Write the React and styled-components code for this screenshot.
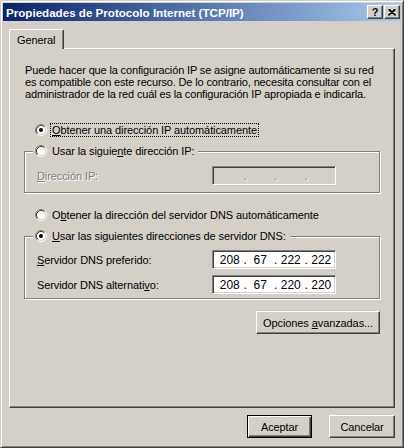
import styled, { createGlobalStyle } from "styled-components";

const Global = createGlobalStyle`
  html, body {
    margin: 0;
    padding: 0;
    background: #d4d0c8;
  }
  body {
    font-family: "Liberation Sans", Arial, sans-serif;
    font-size: 11px;
    letter-spacing: -0.1px;
    color: #000;
  }
`;

const Window = styled.div`
  width: 404px;
  height: 448px;
  box-sizing: border-box;
  background: #d4d0c8;
  border: 1px solid;
  border-color: #d4d0c8 #404040 #404040 #d4d0c8;
  box-shadow: inset 1px 1px #fff, inset -1px -1px #808080;
  padding: 2px;
  display: flex;
  flex-direction: column;
`;

const TitleBar = styled.div`
  height: 18px;
  display: flex;
  align-items: center;
  padding: 0 1px 0 3px;
  background: linear-gradient(to right, #0a246a, #a6caf0);
  color: #fff;
  font-weight: bold;
  font-size: 11.6px;
  letter-spacing: 0;
`;

const Title = styled.span`
  flex: 1;
  white-space: nowrap;
`;

const CaptionButtons = styled.div`
  display: flex;
  gap: 1px;
`;

const CaptionButton = styled.div`
  width: 16px;
  height: 14px;
  box-sizing: border-box;
  background: #d4d0c8;
  border: 1px solid;
  border-color: #fff #404040 #404040 #fff;
  box-shadow: inset -1px -1px #808080;
  display: flex;
  align-items: center;
  justify-content: center;
  color: #000;
  font-weight: bold;
  font-size: 11px;
  line-height: 1;
`;

const Body = styled.div`
  flex: 1;
  display: flex;
  flex-direction: column;
  padding: 8px 6px 0;
`;

const TabStrip = styled.div`
  display: flex;
  position: relative;
  z-index: 1;
`;

const Tab = styled.div`
  height: 20px;
  box-sizing: border-box;
  padding: 0 8px 0 7px;
  margin-bottom: -1px;
  display: flex;
  align-items: center;
  background: #d4d0c8;
  border-left: 1px solid #fff;
  border-top: 1px solid #fff;
  border-right: 1px solid #404040;
  border-top-left-radius: 2px;
  border-top-right-radius: 2px;
  box-shadow: inset -1px 0 #808080;
`;

const Panel = styled.div`
  height: 360px;
  box-sizing: border-box;
  border: 1px solid;
  border-color: #fff #404040 #404040 #fff;
  box-shadow: inset -1px -1px #808080;
  padding: 15px 14px 0;
  display: flex;
  flex-direction: column;
`;

const Intro = styled.p`
  margin: 0 -4px 0 1px;
  line-height: 12px;
  letter-spacing: -0.15px;
`;

const RadioRow = styled.div`
  display: flex;
  align-items: center;
  height: 14px;
  margin: ${(p) => p.$top || 0}px 0 0 ${(p) => (p.$inset ? 0 : 11)}px;
`;

const Label = styled.span`
  margin-left: 3px;
  padding: 0 1px;
  line-height: 12px;
  border: 1px ${(p) => (p.$focus ? "dotted #000" : "solid transparent")};
  white-space: nowrap;
`;

const Key = styled.span`
  text-decoration: underline;
`;

const Group = styled.fieldset`
  margin: ${(p) => p.$top}px 0 0;
  padding: ${(p) => p.$pad};
  min-width: 0;
  border: 1px solid #808080;
  box-shadow: 1px 1px #fff, inset 1px 1px #fff;
  display: flex;
  flex-direction: column;
  gap: 6px;
`;

const Legend = styled.legend`
  margin-left: -4px;
  padding: 0 2px;
  background: #d4d0c8;
`;

const FieldRow = styled.div`
  display: grid;
  grid-template-columns: 175px 124px;
  align-items: center;
`;

const FieldLabel = styled.span`
  color: ${(p) => (p.$disabled ? "#808080" : "#000")};
  text-shadow: ${(p) => (p.$disabled ? "1px 1px #fff" : "none")};
`;

const IpBox = styled.div`
  height: 19px;
  box-sizing: border-box;
  border: 1px solid;
  border-color: #808080 #fff #fff #808080;
  box-shadow: inset 1px 1px #404040, inset -1px -1px #d4d0c8;
  background: ${(p) => (p.$disabled ? "#d4d0c8" : "#fff")};
  color: ${(p) => (p.$disabled ? "#808080" : "#000")};
  display: flex;
  align-items: center;
  padding: 0 0 0 3px;
  font-size: 12px;
  letter-spacing: 0;
`;

const Octet = styled.span`
  width: 28px;
  text-align: center;
`;

const Dot = styled.span`
  width: 3px;
  text-align: center;
  text-shadow: ${(p) => (p.$disabled ? "1px 1px #fff" : "none")};
`;

const ButtonRow = styled.div`
  display: flex;
  justify-content: flex-end;
  gap: 17px;
  margin-top: ${(p) => p.$top || 0}px;
`;

const Button = styled.button`
  width: ${(p) => p.$w}px;
  height: 23px;
  box-sizing: border-box;
  padding: 0;
  font: inherit;
  letter-spacing: inherit;
  color: #000;
  background: #d4d0c8;
  border: 1px solid;
  border-color: ${(p) => (p.$default ? "#000" : "#fff #404040 #404040 #fff")};
  box-shadow: ${(p) =>
    p.$default
      ? "inset 1px 1px #fff, inset -1px -1px #404040, inset -2px -2px #808080"
      : "inset -1px -1px #808080"};
`;

const Radio = ({ checked }) => (
  <svg width="12" height="12" viewBox="0 0 12 12">
    <circle cx="6" cy="6" r="4.5" fill="#fff" />
    <path d="M2.11 9.89 A5.5 5.5 0 0 1 9.89 2.11" fill="none" stroke="#808080" />
    <path d="M9.89 2.11 A5.5 5.5 0 0 1 2.11 9.89" fill="none" stroke="#fff" />
    <path d="M2.82 9.18 A4.5 4.5 0 0 1 9.18 2.82" fill="none" stroke="#404040" />
    <path d="M9.18 2.82 A4.5 4.5 0 0 1 2.82 9.18" fill="none" stroke="#d4d0c8" />
    {checked && <circle cx="6" cy="6" r="2" fill="#000" />}
  </svg>
);

const CloseGlyph = () => (
  <svg width="8" height="7" viewBox="0 0 8 7">
    <path d="M0.5 0.5 L7.5 6.5 M1.5 0.5 L7.5 6 M7.5 0.5 L0.5 6.5 M6.5 0.5 L0.5 6" stroke="#000" strokeWidth="1.2" fill="none" />
  </svg>
);

const IpControl = ({ parts, disabled }) => (
  <IpBox $disabled={disabled}>
    {parts.map((p, i) => [
      <Octet key={"o" + i}>{p}</Octet>,
      i < 3 && (
        <Dot key={"d" + i} $disabled={disabled}>
          .
        </Dot>
      ),
    ])}
  </IpBox>
);

export default function App() {
  return (
    <>
      <Global />
      <Window>
        <TitleBar>
          <Title>Propiedades de Protocolo Internet (TCP/IP)</Title>
          <CaptionButtons>
            <CaptionButton>?</CaptionButton>
            <CaptionButton>
              <CloseGlyph />
            </CaptionButton>
          </CaptionButtons>
        </TitleBar>
        <Body>
          <TabStrip>
            <Tab>General</Tab>
          </TabStrip>
          <Panel>
            <Intro>
              Puede hacer que la configuración IP se asigne automáticamente si su red
              <br />
              es compatible con este recurso. De lo contrario, necesita consultar con el
              <br />
              administrador de la red cuál es la configuración IP apropiada e indicarla.
            </Intro>
            <RadioRow $top={23}>
              <Radio checked />
              <Label $focus>
                <Key>O</Key>btener una dirección IP automáticamente
              </Label>
            </RadioRow>
            <Group $top={7} $pad="8px 8px 7px 12px">
              <Legend>
                <RadioRow $inset>
                  <Radio />
                  <Label>
                    Usar la siguie<Key>n</Key>te dirección IP:
                  </Label>
                </RadioRow>
              </Legend>
              <FieldRow>
                <FieldLabel $disabled>
                  <Key>D</Key>irección IP:
                </FieldLabel>
                <IpControl parts={["", "", "", ""]} disabled />
              </FieldRow>
            </Group>
            <RadioRow $top={15}>
              <Radio />
              <Label>
                O<Key>b</Key>tener la dirección del servidor DNS automáticamente
              </Label>
            </RadioRow>
            <Group $top={7} $pad="7px 8px 4px 12px">
              <Legend>
                <RadioRow $inset>
                  <Radio checked />
                  <Label>
                    <Key>U</Key>sar las siguientes direcciones de servidor DNS:
                  </Label>
                </RadioRow>
              </Legend>
              <FieldRow>
                <FieldLabel>
                  <Key>S</Key>ervidor DNS preferido:
                </FieldLabel>
                <IpControl parts={["208", "67", "222", "222"]} />
              </FieldRow>
              <FieldRow>
                <FieldLabel>
                  Servidor DNS alternati<Key>v</Key>o:
                </FieldLabel>
                <IpControl parts={["208", "67", "220", "220"]} />
              </FieldRow>
            </Group>
            <ButtonRow $top={12}>
              <Button $w={124}>
                Opciones <Key>a</Key>vanzadas...
              </Button>
            </ButtonRow>
          </Panel>
          <ButtonRow $top={7}>
            <Button $w={65} $default>
              Aceptar
            </Button>
            <Button $w={66}>Cancelar</Button>
          </ButtonRow>
        </Body>
      </Window>
    </>
  );
}
